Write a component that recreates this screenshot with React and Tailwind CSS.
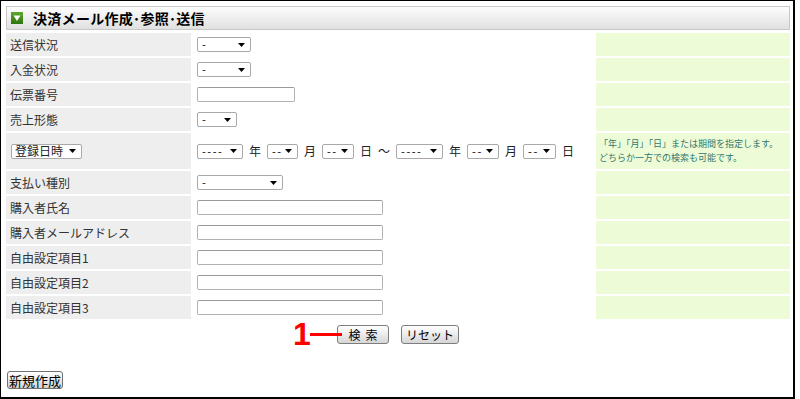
import React from 'react';

// small old-style dropdown (visual only)
function Sel({ w, text }) {
  return (
    <div className={`flex h-[15px] shrink-0 items-center justify-between rounded-[2px] border border-[#a9a9a9] bg-white pl-[4px] pr-[5px] text-[11px] leading-none text-black ${w}`}>
      <span className="tracking-[1.5px]">{text}</span>
      <svg width="7" height="4" viewBox="0 0 7 4">
        <path d="M0 0h7L3.5 4z" fill="#000" />
      </svg>
    </div>
  );
}

function TextBox({ w }) {
  return <div className={`h-[15px] rounded-[2px] border border-[#b2b2b2] border-t-[#9a9a9a] bg-white ${w}`} />;
}

function HeaderIcon() {
  return (
    <svg width="12" height="12" viewBox="0 0 12 12">
      <defs>
        <linearGradient id="hg" x1="0" y1="0" x2="0" y2="1">
          <stop offset="0" stopColor="#5fa82c" />
          <stop offset="1" stopColor="#2e7410" />
        </linearGradient>
      </defs>
      <rect x="0" y="0" width="12" height="12" fill="url(#hg)" />
      <path d="M2.5 3.5h7L6 9z" fill="#fff" />
    </svg>
  );
}

export default function App() {
  const Unit = ({ children }) => <span className="text-[12px] leading-none text-[#222]">{children}</span>;

  const rows = [
    { label: '送信状況', field: <Sel w="w-[54px]" text="-" /> },
    { label: '入金状況', field: <Sel w="w-[54px]" text="-" /> },
    { label: '伝票番号', field: <TextBox w="w-[98px]" /> },
    { label: '売上形態', field: <Sel w="w-[40px]" text="-" /> },
    {
      label: (
        <div className="ml-[1px] flex h-[15px] w-[71px] items-center justify-between rounded-[2px] border border-[#a9a9a9] bg-white pl-[3px] pr-[5px] text-[12px] leading-none text-[#222]">
          <span>登録日時</span>
          <svg width="7" height="4" viewBox="0 0 7 4">
            <path d="M0 0h7L3.5 4z" fill="#000" />
          </svg>
        </div>
      ),
      field: (
        <div className="flex items-center gap-[6px]">
          <Sel w="w-[46px]" text="----" />
          <Unit>年</Unit>
          <Sel w="w-[31px]" text="--" />
          <Unit>月</Unit>
          <Sel w="w-[32px]" text="--" />
          <Unit>日</Unit>
          <Unit>〜</Unit>
          <Sel w="w-[47px]" text="----" />
          <Unit>年</Unit>
          <Sel w="w-[32px]" text="--" />
          <Unit>月</Unit>
          <Sel w="w-[33px]" text="--" />
          <Unit>日</Unit>
        </div>
      ),
      note: (
        <div className="pl-[3px] text-[9px] leading-[14px] text-[#31786f]">
          <div>「年」「月」「日」または期間を指定します。</div>
          <div>どちらか一方での検索も可能です。</div>
        </div>
      ),
    },
    { label: '支払い種別', field: <Sel w="w-[86px]" text="-" /> },
    { label: '購入者氏名', field: <TextBox w="w-[186px]" /> },
    { label: '購入者メールアドレス', field: <TextBox w="w-[186px]" /> },
    { label: '自由設定項目1', field: <TextBox w="w-[186px]" /> },
    { label: '自由設定項目2', field: <TextBox w="w-[186px]" /> },
    { label: '自由設定項目3', field: <TextBox w="w-[186px]" /> },
  ];

  return (
    <div className="h-[399px] w-[800px] bg-white font-['Noto_Sans_CJK_JP',sans-serif]">
      <div className="flex h-[399px] w-[795px] flex-col border-t border-l border-r-2 border-b-2 border-black bg-white px-[5px] pt-[5px]">
        {/* header */}
        <div className="flex h-[24px] w-[784px] items-center gap-[10px] border border-[#c9c9c9] bg-gradient-to-b from-[#fdfdfd] to-[#e0e0e0] pl-[4px]">
          <HeaderIcon />
          <span className="text-[14px] font-bold leading-none tracking-[0.3px] text-black">決済メール作成･参照･送信</span>
        </div>

        {/* search table */}
        <div className="mt-[3px] grid w-[784px] grid-cols-[185px_401px_1fr] grid-rows-[23px_23px_23px_23px_36px_23px_23px_23px_23px_23px_23px] gap-[2px]">
          {rows.map((r, i) => (
            <React.Fragment key={i}>
              <div className="flex items-center bg-[#eeeeee] pl-[4px] text-[12px] leading-none text-[#333]">{r.label}</div>
              <div className="flex items-center bg-white pl-[4px]">{r.field}</div>
              <div className="flex items-center bg-[#edfcd7]">{r.note}</div>
            </React.Fragment>
          ))}
        </div>

        {/* buttons */}
        <div className="mt-[6px] flex w-[784px] justify-center gap-[12px]">
          <div className="relative">
            <span className="absolute left-[-44px] top-[-7px] text-[32px] font-bold leading-none text-[#ff0000] font-['Liberation_Sans',sans-serif]">1</span>
            <span className="absolute left-[-27px] top-[8px] h-[3px] w-[32px] bg-[#ff0000]" />
            <button className="flex h-[19px] w-[52px] items-center justify-center gap-[5px] rounded-[3px] border border-[#7d7d7d] bg-gradient-to-b from-white to-[#d6d6d6] text-[12px] leading-none text-black">
              <span>検</span>
              <span>索</span>
            </button>
          </div>
          <button className="flex h-[19px] w-[58px] items-center justify-center rounded-[3px] border border-[#7d7d7d] bg-gradient-to-b from-white to-[#d6d6d6] text-[12px] leading-none text-black">
            リセット
          </button>
        </div>

        <div className="mt-[27px] pl-[1px]">
          <button className="flex h-[18px] w-[56px] items-center justify-center rounded-[3px] border border-[#707070] bg-gradient-to-b from-white to-[#d2d2d2] text-[13px] leading-none text-black">
            新規作成
          </button>
        </div>
      </div>
    </div>
  );
}
